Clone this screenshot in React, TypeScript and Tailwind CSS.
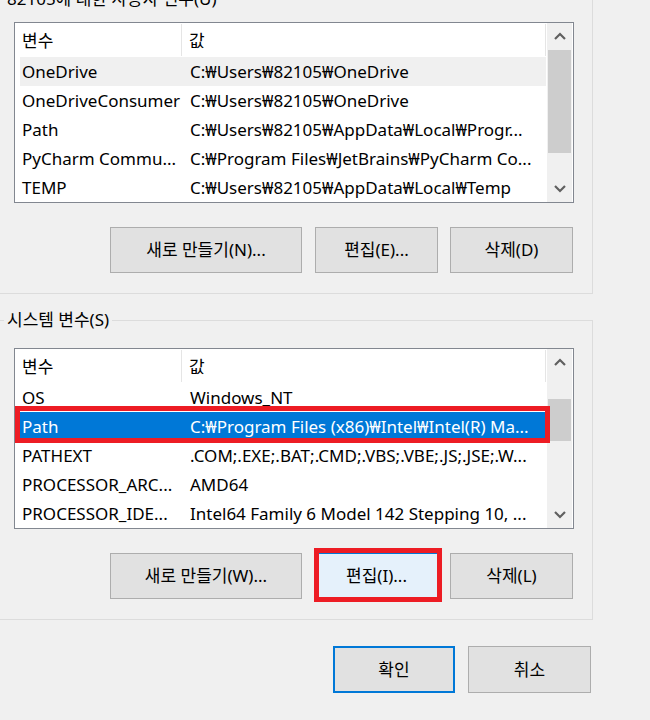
import React from "react";

type Row = { name: string; value: string; hover?: boolean; selected?: boolean };

const userVars: Row[] = [
  { name: "OneDrive", value: "C:₩Users₩82105₩OneDrive", hover: true },
  { name: "OneDriveConsumer", value: "C:₩Users₩82105₩OneDrive" },
  { name: "Path", value: "C:₩Users₩82105₩AppData₩Local₩Progr..." },
  { name: "PyCharm Commu...", value: "C:₩Program Files₩JetBrains₩PyCharm Co..." },
  { name: "TEMP", value: "C:₩Users₩82105₩AppData₩Local₩Temp" },
];

const systemVars: Row[] = [
  { name: "OS", value: "Windows_NT" },
  { name: "Path", value: "C:₩Program Files (x86)₩Intel₩Intel(R) Ma...", selected: true },
  { name: "PATHEXT", value: ".COM;.EXE;.BAT;.CMD;.VBS;.VBE;.JS;.JSE;.W..." },
  { name: "PROCESSOR_ARC...", value: "AMD64" },
  { name: "PROCESSOR_IDE...", value: "Intel64 Family 6 Model 142 Stepping 10, ..." },
];

function Chevron({ up }: { up?: boolean }) {
  return (
    <svg width="12" height="8" viewBox="0 0 12 8">
      <polyline
        points={up ? "1,7 6,2 11,7" : "1,1 6,6 11,1"}
        fill="none"
        stroke="#606060"
        strokeWidth="2.2"
      />
    </svg>
  );
}

function Scrollbar({ thumbTop, thumbHeight }: { thumbTop: number; thumbHeight: number }) {
  return (
    <div className="w-[25px] mr-[1px] flex flex-col bg-[#f0f0f0]">
      <div className="h-[26px] flex items-center justify-center">
        <Chevron up />
      </div>
      <div className="flex-1">
        <div className="bg-[#cdcdcd] mx-[1px]" style={{ marginTop: thumbTop, height: thumbHeight }} />
      </div>
      <div className="h-[26px] flex items-center justify-center">
        <Chevron />
      </div>
    </div>
  );
}

function VarList({ rows, thumbTop, thumbHeight }: { rows: Row[]; thumbTop: number; thumbHeight: number }) {
  return (
    <div className="ml-[17px] w-[560px] h-[181px] border border-[#828790] bg-white flex">
      <div className="flex-1 pl-[5px] pr-[1px] flex flex-col">
        {/* header */}
        <div className="h-[34px] flex items-start pt-[1px]">
          <div className="w-[162px] h-[32px] flex items-center pt-[2px] pl-[2px] border-r border-[#e5e5e5]">변수</div>
          <div className="flex-1 h-[32px] flex items-center pt-[2px] pl-[7px] border-r border-[#e5e5e5]">값</div>
        </div>
        {rows.map((r) => (
          <div
            key={r.name}
            className={
              "relative h-[29px] flex items-center whitespace-nowrap " +
              (r.selected ? "bg-[#0078d7] text-white" : r.hover ? "bg-[#f0f0f0]" : "")
            }
          >
            <div className="w-[162px] pl-[2px] overflow-hidden">{r.name}</div>
            <div className="flex-1 pl-[8px] overflow-hidden">{r.value}</div>
            {r.selected && (
              <span className="absolute top-[-6px] bottom-[-2px] left-[-5px] right-[-4px] border-[5px] border-[#ed1c24]" />
            )}
          </div>
        ))}
      </div>
      <Scrollbar thumbTop={thumbTop} thumbHeight={thumbHeight} />
    </div>
  );
}

function Btn({
  label,
  w,
  className = "",
  highlight,
}: {
  label: string;
  w: string;
  className?: string;
  highlight?: boolean;
}) {
  return (
    <div className={"relative " + className}>
      <button
        className={
          w +
          " h-[46px] border " +
          (highlight ? "bg-[#e5f1fb] border-[#0078d7]" : "bg-[#e1e1e1] border-[#adadad]")
        }
      >
        {label}
      </button>
      {highlight && (
        <span className="absolute top-[-5px] bottom-[-3px] left-[-1px] right-[-4px] border-[5px] border-[#ed1c24]" />
      )}
    </div>
  );
}

export default function App() {
  return (
    <div className="w-[650px] h-[720px] overflow-hidden bg-[#f0f0f0] text-black text-[17px] font-['Noto_Sans','Noto_Sans_CJK_KR',sans-serif]">
      {/* User variables */}
      <fieldset className="ml-[-4px] mt-[-13px] w-[597px] border border-[#dcdcdc] pb-[20px]">
        <legend className="ml-[7px] px-[3px] leading-[24px]">82105에 대한 사용자 변수(U)</legend>
        <div className="mt-[11px]">
          <VarList rows={userVars} thumbTop={1} thumbHeight={103} />
        </div>
        <div className="flex mt-[24px] ml-[113px]">
          <Btn label="새로 만들기(N)..." w="w-[192px]" />
          <Btn label="편집(E)..." w="w-[123px]" className="ml-[13px]" />
          <Btn label="삭제(D)" w="w-[123px]" className="ml-[12px]" />
        </div>
      </fieldset>

      {/* System variables */}
      <fieldset className="ml-[-4px] mt-[14px] w-[597px] border border-[#dcdcdc] pb-[20px]">
        <legend className="ml-[7px] px-[3px] leading-[24px]">시스템 변수(S)</legend>
        <div className="mt-[16px]">
          <VarList rows={systemVars} thumbTop={24} thumbHeight={42} />
        </div>
        <div className="flex mt-[24px] ml-[113px]">
          <Btn label="새로 만들기(W)..." w="w-[192px]" />
          <Btn label="편집(I)..." w="w-[123px]" className="ml-[13px]" highlight />
          <Btn label="삭제(L)" w="w-[123px]" className="ml-[12px]" />
        </div>
      </fieldset>

      {/* OK / Cancel */}
      <div className="flex justify-end gap-[13px] pr-[59px] mt-[26px]">
        <button className="w-[122px] h-[47px] bg-[#e1e1e1] border-2 border-[#0078d7]">확인</button>
        <button className="w-[123px] h-[47px] bg-[#e1e1e1] border border-[#adadad]">취소</button>
      </div>
    </div>
  );
}
